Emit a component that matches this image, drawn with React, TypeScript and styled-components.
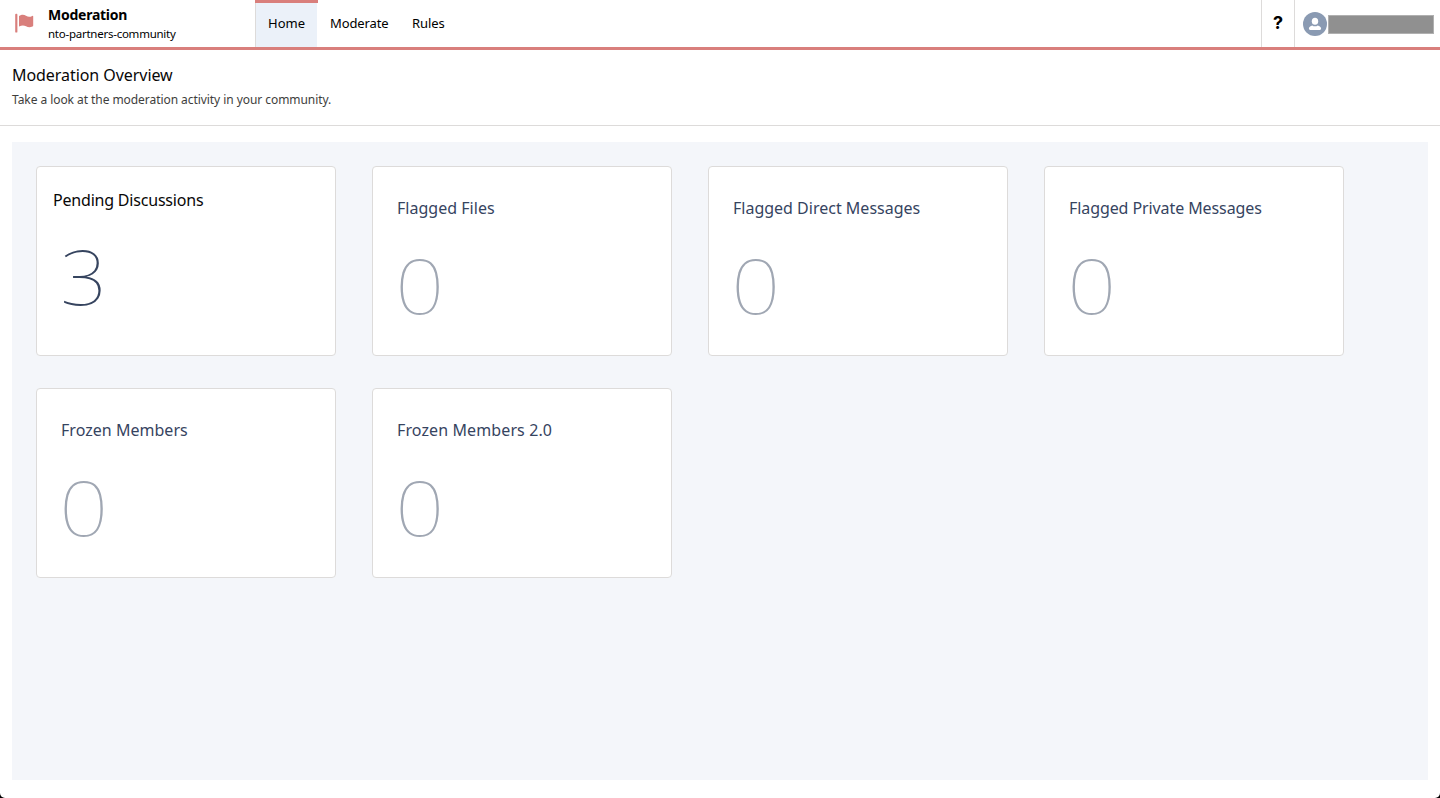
import React from "react";
import styled, { createGlobalStyle } from "styled-components";

const Global = createGlobalStyle`
  * { box-sizing: border-box; }
  html { background: #000; }
  body { margin: 0; background: #000; font-family: "Noto Sans", "Open Sans", sans-serif; color: #080707; }
  h1, h2, p { margin: 0; font-weight: 400; }
`;

const Page = styled.div`
  height: 798px;
  display: flex;
  flex-direction: column;
  background: #fff;
  border-radius: 0 0 5px 5px;
  overflow: hidden;
`;

const Header = styled.header`
  height: 50px;
  flex: none;
  display: flex;
  border-bottom: 3px solid #d97f7c;
`;

const Brand = styled.div`
  width: 255px;
  display: flex;
  padding: 5px 0 0 14px;
`;

const FlagIcon = styled.svg`
  width: 20px;
  height: 20px;
  margin: 8px 14px 0 0;
  fill: #d97f7c;
`;

const BrandName = styled.div`
  font-size: 14px;
  line-height: 19px;
  font-weight: 700;
  letter-spacing: -0.25px;
  color: #000;
`;

const BrandSite = styled.div`
  font-size: 11.5px;
  line-height: 20px;
  letter-spacing: -0.25px;
  color: #000;
`;

const Nav = styled.nav`
  display: flex;
  flex: 1;
`;

const Tab = styled.a<{ $active?: boolean; $width: number; $spacing: number }>`
  position: relative;
  width: ${(p) => p.$width}px;
  padding: 3px 0 0 12px;
  border-left: 1px solid ${(p) => (p.$active ? "#dddbda" : "transparent")};
  background: ${(p) => (p.$active ? "#ebf1f9" : "transparent")};
  font-size: 13px;
  line-height: 41px;
  letter-spacing: ${(p) => p.$spacing}px;
  color: #000;

  &::before {
    content: "";
    display: ${(p) => (p.$active ? "block" : "none")};
    position: absolute;
    top: 0;
    left: -1px;
    right: -1px;
    height: 3px;
    background: #d97f7c;
  }
`;

const Help = styled.div`
  width: 33px;
  border-left: 1px solid #dddbda;
  font: 700 18px/45px "Inter", sans-serif;
  text-align: center;
  color: #000;
`;

const User = styled.div`
  width: 146px;
  border-left: 1px solid #dddbda;
  display: flex;
  align-items: center;
  padding-left: 8px;
`;

const Avatar = styled.svg`
  width: 24px;
  height: 24px;
  margin: 1px 1px 0 0;
`;

const Redacted = styled.div`
  width: 106px;
  height: 19px;
  margin-top: 2px;
  background: #909090;
  border: 1px solid #b0b0b0;
`;

const Intro = styled.section`
  height: 76px;
  flex: none;
  padding: 13px 12px 0;
  border-bottom: 1px solid #dddbda;
`;

const Title = styled.h1`
  font-size: 16px;
  line-height: 25px;
  letter-spacing: -0.06px;
  color: #080707;
`;

const Subtitle = styled.p`
  font-size: 12px;
  line-height: 18px;
  margin-top: 3px;
  letter-spacing: -0.06px;
  color: #3e3e3c;
`;

const Board = styled.main`
  flex: 1;
  margin: 16px 12px 18px;
  padding: 24px;
  background: #f4f6fa;
  display: grid;
  grid-template-columns: repeat(4, 300px);
  grid-auto-rows: 190px;
  align-content: start;
  gap: 32px 36px;
`;

const Card = styled.article<{ $selected?: boolean }>`
  padding: ${(p) => (p.$selected ? "21px 16px" : "29px 24px")};
  border: 1px solid #dddbda;
  border-radius: 4px;
  background: #fff;
  color: ${(p) => (p.$selected ? "#080707" : "#36445f")};
`;

const CardTitle = styled.h2<{ $spacing: number }>`
  font-size: 16px;
  line-height: 24px;
  letter-spacing: ${(p) => p.$spacing}px;
  white-space: nowrap;
`;

const Count = styled.div<{ $selected?: boolean }>`
  width: fit-content;
  margin: ${(p) => (p.$selected ? "22px 0 0 9px" : "23px 0 0 1px")};
  font-size: 76px;
  line-height: 84px;
  font-weight: 100;
  transform: scaleX(${(p) => (p.$selected ? 1.08 : 1.13)});
  color: ${(p) => (p.$selected ? "#36445f" : "#a0a7b3")};
`;

const metrics = [
  { title: "Pending Discussions", count: 3, selected: true, spacing: -0.2 },
  { title: "Flagged Files", count: 0, spacing: 0.02 },
  { title: "Flagged Direct Messages", count: 0, spacing: 0 },
  { title: "Flagged Private Messages", count: 0, spacing: -0.09 },
  { title: "Frozen Members", count: 0, spacing: 0.03 },
  { title: "Frozen Members 2.0", count: 0, spacing: 0.11 },
];

export default function App() {
  return (
    <>
      <Global />
      <Page>
        <Header>
          <Brand>
            <FlagIcon viewBox="0 0 20 20">
              <rect x="1.2" y="0.8" width="2.2" height="18.8" rx="0.9" />
              <path d="M5 3 C8 1.2 10 1.6 12 2.8 C14 4 16 4.100 18.200 2.900 Q19.200 2.400 19.200 3.300 V12.400 Q19.200 13.200 18.400 13.600 C16 14.800 14 14.400 12 13.300 C10 12.100 8 12 5 13.400 Z" />
            </FlagIcon>
            <div>
              <BrandName>Moderation</BrandName>
              <BrandSite>nto-partners-community</BrandSite>
            </div>
          </Brand>
          <Nav>
            <Tab $active $width={62} $spacing={0.05}>Home</Tab>
            <Tab $width={82} $spacing={-0.12}>Moderate</Tab>
            <Tab $width={60} $spacing={-0.05}>Rules</Tab>
          </Nav>
          <Help>?</Help>
          <User>
            <Avatar viewBox="0 0 24 24">
              <circle cx="12" cy="12" r="12" fill="#8a9ab2" />
              <ellipse cx="12" cy="9.300" rx="3.200" ry="3.500" fill="#fff" />
              <path d="M9.300 13.400c.7.600 1.600.9 2.700.9s2-.3 2.700-.9c2 .7 3.400 1.600 3.400 3.200 0 .9-.5 1.400-1.300 1.400H7.200c-.8 0-1.300-.5-1.300-1.400 0-1.600 1.400-2.500 3.400-3.200z" fill="#fff" />
            </Avatar>
            <Redacted />
          </User>
        </Header>
        <Intro>
          <Title>Moderation Overview</Title>
          <Subtitle>Take a look at the moderation activity in your community.</Subtitle>
        </Intro>
        <Board>
          {metrics.map((m) => (
            <Card key={m.title} $selected={m.selected}>
              <CardTitle $spacing={m.spacing}>{m.title}</CardTitle>
              <Count $selected={m.selected}>{m.count}</Count>
            </Card>
          ))}
        </Board>
      </Page>
    </>
  );
}
